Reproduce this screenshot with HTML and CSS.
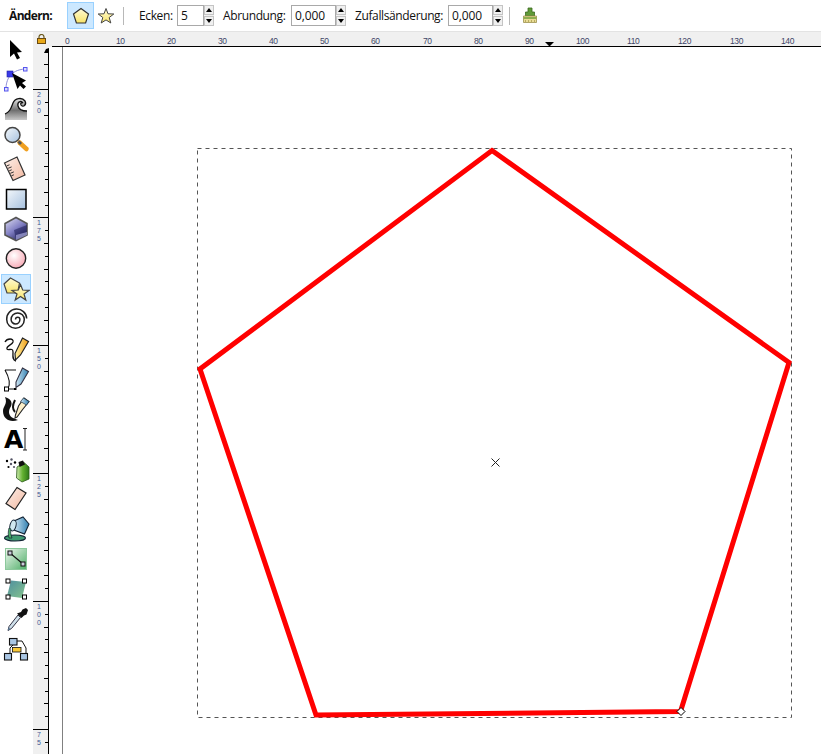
FILE: index.html
```html
<!DOCTYPE html>
<html lang="de">
<head>
<meta charset="utf-8">
<title>Inkscape</title>
<link rel="stylesheet" href="styles.css">
</head>
<body>
<div class="app">
  <header class="topbar">
    <span class="label strong">Ändern:</span>
    <button class="mode active">
      <svg width="18" height="18" viewBox="0 0 18 18">
        <defs>
          <linearGradient id="yel" x1="0" y1="0" x2="0" y2="1"><stop offset="0" stop-color="#fffbd8"/><stop offset="1" stop-color="#f8e468"/></linearGradient>
          <linearGradient id="glass" x1="0" y1="0" x2="1" y2="1"><stop offset="0" stop-color="#f4f8fb"/><stop offset="1" stop-color="#a5c0de"/></linearGradient>
          <linearGradient id="wave" x1="0" y1="0" x2="0" y2="1"><stop offset="0" stop-color="#e8e8e8"/><stop offset=".55" stop-color="#6f6f6f"/><stop offset="1" stop-color="#c8c8c8"/></linearGradient>
          <linearGradient id="box" x1="0" y1="0" x2=".7" y2="1"><stop offset="0" stop-color="#e2e2f2"/><stop offset=".55" stop-color="#8280c4"/><stop offset="1" stop-color="#25255f"/></linearGradient>
          <radialGradient id="pink" cx=".4" cy=".35" r=".7"><stop offset="0" stop-color="#fff"/><stop offset="1" stop-color="#f8a8b4"/></radialGradient>
          <linearGradient id="peach" x1="0" y1="0" x2="1" y2="1"><stop offset="0" stop-color="#fdf0ea"/><stop offset="1" stop-color="#f2b8a0"/></linearGradient>
          <linearGradient id="green" x1="0" y1="0" x2="1" y2="1"><stop offset="0" stop-color="#f0f8f0"/><stop offset="1" stop-color="#4fae68"/></linearGradient>
          <linearGradient id="can" x1="0" y1="0" x2="1" y2="0"><stop offset="0" stop-color="#cfeab0"/><stop offset=".5" stop-color="#62b030"/><stop offset="1" stop-color="#2e7a18"/></linearGradient>
          <linearGradient id="pen" x1="0" y1="0" x2="1" y2="0"><stop offset="0" stop-color="#cfe6f4"/><stop offset="1" stop-color="#2f7fb0"/></linearGradient>
          <linearGradient id="orange" x1="0" y1="0" x2="1" y2="0"><stop offset="0" stop-color="#fff4a8"/><stop offset="1" stop-color="#f09a10"/></linearGradient>
          <linearGradient id="teal" x1="0" y1="0" x2="1" y2="1"><stop offset="0" stop-color="#4e8fa0"/><stop offset="1" stop-color="#86c48c"/></linearGradient>
        </defs>
        <path d="M9 1.500 16.500 7 13.600 16H4.400L1.500 7Z" fill="url(#yel)" stroke="#333" stroke-width="1.200"/>
      </svg>
    </button>
    <button class="mode star-mode">
      <svg width="18" height="18" viewBox="0 0 18 18"><path d="M9 1.500 11 6.800 16.800 7 12.200 10.500 13.800 16 9 12.900 4.200 16 5.800 10.500 1.200 7 7 6.800Z" fill="url(#yel)" stroke="#444" stroke-width="1"/></svg>
    </button>
    <span class="sep first-sep"></span>
    <span class="label ecken">Ecken:</span>
    <span class="spin narrow"><span class="value">5</span></span>
    <span class="stepper"><i class="up"></i><i class="down"></i></span>
    <span class="label abr">Abrundung:</span>
    <span class="spin"><span class="value">0,000</span></span>
    <span class="stepper"><i class="up"></i><i class="down"></i></span>
    <span class="label zuf">Zufallsänderung:</span>
    <span class="spin"><span class="value">0,000</span></span>
    <span class="stepper"><i class="up"></i><i class="down"></i></span>
    <span class="sep last-sep"></span>
    <svg class="brush" width="16" height="18" viewBox="0 0 16 18">
      <path d="M6 1h4v4h2.500v4H3.500V5H6Z" fill="#5f9a38" stroke="#3b6a20" stroke-width=".8"/>
      <path d="M1.500 9h13v6.500h-13Z" fill="#e9dc95" stroke="#9a9050" stroke-width=".8"/>
      <path d="M1.500 11h13" stroke="#8fae50" stroke-width="2"/>
      <path d="M3.500 13v2.500M6.500 13v2.500M9.500 13v2.500M12.500 13v2.500" stroke="#b8aa60"/>
    </svg>
  </header>

  <div class="workspace">
    <nav class="tools">
      <span class="tool"><svg viewBox="0 0 28 28"><path d="M8 5V22L12 18.500 15 24.500 18 23 15 17.500 20 17Z" fill="#000"/></svg></span>
      <span class="tool"><svg viewBox="0 0 28 28"><path d="M4 24C4 15 8 5 23 4" fill="none" stroke="#8d8dd8"/><rect x="5" y="6" width="6" height="6" fill="#3a3ae8" stroke="#2020a0" stroke-width=".6"/><rect x="21.500" y="2.500" width="3.500" height="3.500" fill="#dcdcff" stroke="#5555ee"/><rect x="2.500" y="22.500" width="3.500" height="3.500" fill="#dcdcff" stroke="#5555ee"/><path d="M10 8 24 15.500 20 18 24 21.500 21.500 24 18 20.500 15.500 24Z" fill="#000"/></svg></span>
      <span class="tool"><svg viewBox="0 0 28 28"><path d="M3 25V19C8 17 9 13 11 8 13 3 20 2 23 6 25 10 21 13 19 10 18 8 20 7 21 8 19 5 15 7 16 11 17 15 21 16 25 16V25Z" fill="url(#wave)"/><path d="M3 19C8 17 9 13 11 8 13 3 20 2 23 6 25 10 21 13 19 10 18 8 20 7 21 8 19 5 15 7 16 11 17 15 21 16 25 16" fill="none" stroke="#111" stroke-width="1.300"/></svg></span>
      <span class="tool"><svg viewBox="0 0 28 28"><path d="M17.500 17.500 24.500 24" stroke="#f0a020" stroke-width="4.500" stroke-linecap="round"/><path d="M16.500 16.500 19 19" stroke="#555" stroke-width="3"/><circle cx="10.500" cy="10" r="7.500" fill="url(#glass)" stroke="#444" stroke-width="1.500"/></svg></span>
      <span class="tool"><svg viewBox="0 0 28 28"><path d="M2.500 8 15 2 23 20 11 25.500Z" fill="url(#peach)" stroke="#333" stroke-width="1.200"/><path d="M5 10.800 7.500 9.800M6.100 13.300 9.600 11.900M7.200 15.800 9.700 14.800M8.300 18.300 11.800 16.900M9.400 20.800 11.900 19.800" stroke="#333"/></svg></span>
      <span class="tool"><svg viewBox="0 0 28 28"><rect x="4.500" y="4.500" width="19.500" height="19.500" fill="url(#glass)" stroke="#000" stroke-width="1.500"/></svg></span>
      <span class="tool"><svg viewBox="0 0 28 28"><path d="M14 2.500 25 8.500V20L14 25.500 3 20V8.500Z" fill="url(#box)" stroke="#555" stroke-width="1.600"/><path d="M12 15 25 10V20L14 25Z" fill="#1e1e58" opacity=".55"/><path d="M14 20 25 17V20L14 25Z" fill="#a8a8dc" opacity=".7"/></svg></span>
      <span class="tool"><svg viewBox="0 0 28 28"><circle cx="14" cy="13.500" r="9.700" fill="url(#pink)" stroke="#222" stroke-width="1.400"/></svg></span>
      <span class="tool selected"><svg viewBox="0 0 28 28"><path d="M8.500 3 17.500 8 15.500 18H5L2 9Z" fill="url(#yel)" stroke="#444" stroke-width="1.200"/><path d="M18.500 9.500 20.700 15 27 15.400 22 19 23.800 25 18.500 21.500 13.200 25 15 19 10 15.400 16.300 15Z" fill="url(#yel)" stroke="#444" stroke-width="1.200"/></svg></span>
      <span class="tool"><svg viewBox="0 0 28 28"><path d="M13.500 14.500a2.200 2.200 0 0 1 4.400 0a4.400 4.400 0 0 1-8.800 0a6.600 6.600 0 0 1 13.200 0a8.800 8.800 0 0 1-17.600 0a10 10 0 0 1 20-1" fill="none" stroke="#222" stroke-width="1.500"/></svg></span>
      <span class="tool"><svg viewBox="0 0 28 28"><path d="M3 7C5 3 12 3 11 7 10 10 4 11 5 14 6 16 11 12 11 17 11 21 10 25 14 26" fill="none" stroke="#111" stroke-width="1.300"/><path d="M20.500 3 26.500 6.500 18.500 20 13.500 25 13 18.500Z" fill="url(#orange)" stroke="#222" stroke-width="1.200"/></svg></span>
      <span class="tool"><svg viewBox="0 0 28 28"><path d="M3 5H14M3 5C7 12 9 18 6 24H15" fill="none" stroke="#111" stroke-width="1.100"/><rect x="2.500" y="22" width="4" height="4" fill="#fff" stroke="#000"/><rect x="12" y="23" width="2" height="2"/><path d="M20.500 3 26.500 6.500 19 19 14 22.500 14 17Z" fill="url(#pen)" stroke="#334" stroke-width="1.100"/></svg></span>
      <span class="tool"><svg viewBox="0 0 28 28"><path d="M3 2C10 4 11 9 8 13 6 17 7 21 11 23L16 25C8 28 1 24 1 16 1 11 6 9 3 2Z" fill="#111"/><path d="M13 5C11 9 10 14 13 17" fill="none" stroke="#111" stroke-width="2"/><path d="M22 3 27 6.500 21 14 15 22 13 23 13.500 20 16.500 11Z" fill="#fbeec8" stroke="#222" stroke-width="1.100"/><path d="M21.500 3 27 6.500 24.500 10 18.500 6.500Z" fill="url(#pen)" stroke="#234" stroke-width=".7"/></svg></span>
      <span class="tool"><svg viewBox="0 0 28 28"><text class="a-glyph" x="2" y="23">A</text><path d="M21 3.500H25M21 25H25M23 3.500V25" stroke="#222" stroke-width="1"/></svg></span>
      <span class="tool"><svg viewBox="0 0 28 28"><path d="M15 12 22 7.500 27 12V24L20 27 14.500 23Z" fill="url(#can)" stroke="#2a5a18" stroke-width=".8"/><path d="M16.500 7 21 5.500 23 9.500 17.500 12Z" fill="#111"/><circle cx="5" cy="6" r="1.200"/><circle cx="9.500" cy="4.500" r="1.200" fill="#556"/><circle cx="13" cy="7.500" r="1.200"/><circle cx="9" cy="9" r="1.200" fill="#556"/><circle cx="6.500" cy="12" r="1.100"/><circle cx="12" cy="12" r="1.100" fill="#556"/></svg></span>
      <span class="tool"><svg viewBox="0 0 28 28"><path d="M15 2.500 24 8 13 24.500 4 18.500Z" fill="url(#peach)" stroke="#222" stroke-width="1.200"/></svg></span>
      <span class="tool"><svg viewBox="0 0 28 28"><ellipse cx="13" cy="23" rx="10.500" ry="3" fill="#3f9a70" stroke="#123" stroke-width="1.100"/><path d="M12 6 21 2 27 9 22.500 19 12 15Z" fill="url(#pen)" stroke="#123" stroke-width="1.100"/><ellipse cx="11" cy="10.500" rx="3" ry="5.500" transform="rotate(15 11 10.500)" fill="#d0e8f0" stroke="#123"/><path d="M9 14C8 17 9 20 10 23H7C6 20 6 17 7 13Z" fill="#4fae68" stroke="#123" stroke-width=".7"/></svg></span>
      <span class="tool"><svg viewBox="0 0 28 28"><rect x="3.500" y="3.500" width="21" height="21" fill="url(#green)" stroke="#8cc89c"/><path d="M8 8 21 19" stroke="#111" stroke-width="1.200"/><rect x="6" y="6" width="4" height="4" fill="#ccd" stroke="#111"/><rect x="19" y="17" width="4" height="4" fill="#ccd" stroke="#111"/></svg></span>
      <span class="tool"><svg viewBox="0 0 28 28"><path d="M9 5.500 24 7 20 23 5 21Z" fill="url(#teal)"/><rect x="4" y="4" width="4" height="4" fill="#fff" stroke="#000"/><rect x="20.500" y="4" width="4" height="4" fill="#fff" stroke="#000"/><rect x="4" y="20" width="4" height="4" fill="#fff" stroke="#000"/><rect x="20.500" y="20" width="4" height="4" fill="#fff" stroke="#000"/></svg></span>
      <span class="tool"><svg viewBox="0 0 28 28"><path d="M16 10 7 21.500 6 25.500 9.500 23.500 18.500 12.500Z" fill="#cfe0ea" stroke="#334" stroke-width="1"/><path d="M6.500 22.500 6 25.500 8.500 24Z" fill="#5a7a98"/><path d="M15 8.500 19.500 13 22 10.500 24.500 9.500 26 5 24 3 20.500 4.500 19 7Z" fill="#111"/></svg></span>
      <span class="tool"><svg viewBox="0 0 28 28"><path d="M15 6H20L24 13V18M8 18V13L12 9" fill="none" stroke="#111"/><rect x="2.500" y="18.500" width="7" height="6.500" fill="#a9c6e4" stroke="#111" stroke-width="1.100"/><rect x="18.500" y="18.500" width="7" height="6.500" fill="#a9c6e4" stroke="#111" stroke-width="1.100"/><rect x="7.500" y="3.500" width="7.500" height="6.500" fill="#a9c6e4" stroke="#111" stroke-width="1.100"/><rect x="10.500" y="12.500" width="8.500" height="4.500" fill="#f8c838" stroke="#111" stroke-width=".8"/></svg></span>
    </nav>

    <main class="stage">
      <div class="corner">
        <svg class="lock" width="9" height="10" viewBox="0 0 9 10"><path d="M2 4.500V3a2.500 2.500 0 0 1 5 0v1.500" fill="none" stroke="#6b5a20" stroke-width="1.200"/><rect x=".5" y="4.500" width="8" height="5" fill="#e8a818" stroke="#6b4a10"/></svg>
      </div>
      <svg id="hruler" class="hruler" width="772" height="15" viewBox="49 32 772 15"></svg>
      <svg id="vruler" class="vruler" width="16" height="707" viewBox="33 47 16 707"></svg>
      <svg class="canvas" width="772" height="707" viewBox="49 47 772 707">
        <path d="M62.500 47V754" stroke="#808080" fill="none"/>
        <rect x="197.500" y="148.500" width="594" height="569" fill="none" stroke="#555" stroke-dasharray="4 4"/>
        <path d="M492 150.500 789 362.500 680.500 711.500 316 715 200 369Z" fill="none" stroke="#f00" stroke-width="5" stroke-miterlimit="10"/>
        <path d="M491.500 458.500 499.500 466.500M499.500 458.500 491.500 466.500" stroke="#222" fill="none"/>
        <path class="handle" d="M681 707.500 685 711.500 681 715.500 677 711.500Z" fill="#fff" stroke="#000"/>
      </svg>
    </main>
  </div>
</div>
<script src="rulers.js"></script>
</body>
</html>
```

FILE: styles.css
```css
html, body {
  margin: 0;
  padding: 0;
  background: #fff;
}
.app {
  width: 821px;
  height: 754px;
  display: flex;
  flex-direction: column;
  overflow: hidden;
  font-family: "Open Sans", "Noto Sans", sans-serif;
  font-size: 12px;
  color: #111;
}
.topbar {
  height: 31px;
  flex: none;
  display: flex;
  align-items: center;
  padding-left: 9px;
  border-bottom: 1px solid #e3e3e3;
  background: #fff;
}
.label {
  white-space: nowrap;
  letter-spacing: -0.38px;
}
.strong {
  font-weight: 700;
  width: 58px;
  letter-spacing: -0.65px;
}
.mode {
  width: 27px;
  height: 27px;
  padding: 0;
  border: 1px solid transparent;
  background: transparent;
  display: flex;
  align-items: center;
  justify-content: center;
}
.mode.active {
  background: #cce8ff;
  border-color: #99d1ff;
}
.star-mode {
  margin-left: -2px;
}
.sep {
  width: 1px;
  height: 18px;
  background: #b8b8b8;
}
.first-sep {
  margin-left: 4px;
}
.last-sep {
  margin-left: 6px;
}
.ecken {
  margin-left: 15px;
  width: 38px;
}
.abr {
  margin-left: 9px;
  width: 68px;
}
.zuf {
  margin-left: 9px;
  width: 93px;
}
.spin {
  box-sizing: border-box;
  width: 45px;
  height: 21px;
  border: 1px solid #a9a9a9;
  display: flex;
  align-items: center;
  padding-left: 3px;
  background: #fff;
}
.spin.narrow {
  width: 27px;
}
.value {
  letter-spacing: -0.1px;
}
.stepper {
  width: 10px;
  height: 21px;
  display: flex;
  flex-direction: column;
  gap: 1px;
  background: #f0f0f0;
}
.stepper i {
  flex: 1;
  border: 1px solid #c4c4c4;
  background: #f0f0f0;
  display: flex;
  align-items: center;
  justify-content: center;
}
.stepper i::before {
  content: "";
  width: 0;
  height: 0;
  border-left: 3px solid transparent;
  border-right: 3px solid transparent;
}
.stepper .up::before {
  border-bottom: 4px solid #000;
}
.stepper .down::before {
  border-top: 4px solid #000;
}
.brush {
  margin-left: 12px;
}
.workspace {
  flex: 1;
  display: flex;
  min-height: 0;
}
.tools {
  box-sizing: border-box;
  width: 33px;
  flex: none;
  padding: 2px 0 0 1px;
  display: flex;
  flex-direction: column;
  align-items: flex-start;
}
.tool {
  box-sizing: border-box;
  width: 30px;
  height: 30px;
  flex: none;
  display: flex;
  align-items: center;
  justify-content: center;
  border: 1px solid transparent;
}
.tool svg {
  width: 28px;
  height: 28px;
  display: block;
}
.tool.selected {
  background: #cce8ff;
  border-color: #99d1ff;
}
.a-glyph {
  font-family: "DejaVu Sans", sans-serif;
  font-weight: 700;
  font-size: 25px;
  fill: #000;
}
.stage {
  flex: 1;
  display: grid;
  grid-template-columns: 16px 772px;
  grid-template-rows: 15px 707px;
}
.corner {
  background: #f0f0f0;
  padding: 2px 0 0 4px;
}
.lock,
.hruler,
.vruler,
.canvas {
  display: block;
}
.hruler,
.vruler {
  background: #f0f0f0;
}
.tick {
  stroke: #000;
  fill: none;
  shape-rendering: crispEdges;
}
.num {
  font-family: "Liberation Sans", sans-serif;
  font-size: 8.500px;
  letter-spacing: -0.4px;
  fill: #3f4668;
}
.digit {
  font-family: "Liberation Sans", sans-serif;
  font-size: 7px;
  fill: #3f5a94;
}
```

FILE: rulers.js
```js
var NS = "http://www.w3.org/2000/svg";
var UNIT = 5.116;

function add(parent, tag, attrs, text) {
  var el = document.createElementNS(NS, tag);
  for (var key in attrs) el.setAttribute(key, attrs[key]);
  if (text !== undefined) el.textContent = text;
  parent.appendChild(el);
}

/* horizontal ruler: one tick per unit, label every ten */
var h = document.getElementById("hruler");
var hd = "M52 46.500H821";
for (var i = -2; i <= 150; i++) {
  var x = Math.round(62.5 + i * UNIT) + 0.5;
  var top = i % 10 === 0 ? 35 : i % 5 === 0 ? 41 : i % 2 === 0 ? 42 : 43;
  hd += "M" + x + " " + top + "V46";
  if (i % 10 === 0 && i >= 0 && i <= 140) {
    add(h, "text", { "class": "num", x: x + 1.5, y: 44 }, String(i));
  }
}
add(h, "path", { "class": "tick", d: hd });
add(h, "path", { d: "M545 42H554L549.500 46.500Z", fill: "#000" });

/* vertical ruler: one tick per 2.5 units, label every 25 */
var v = document.getElementById("vruler");
var vd = "M48.500 52V754";
for (var k = 0; k <= 56; k++) {
  var value = 212.5 - k * 2.5;
  var y = Math.round(25.5 + k * 2.5 * UNIT) + 0.5;
  var major = value % 25 === 0;
  var left = major ? 33 : value % 5 === 0 ? 44 : 45;
  if (y >= 50) vd += "M" + left + " " + y + "H48";
  if (major) {
    String(value).split("").forEach(function (digit, n) {
      add(v, "text", { "class": "digit", x: 37, y: y + 7.5 + n * 8.1 }, digit);
    });
  }
}
add(v, "path", { "class": "tick", d: vd });
add(v, "path", { d: "M44 53 46 49 49 48V53Z", fill: "#000" });
```
